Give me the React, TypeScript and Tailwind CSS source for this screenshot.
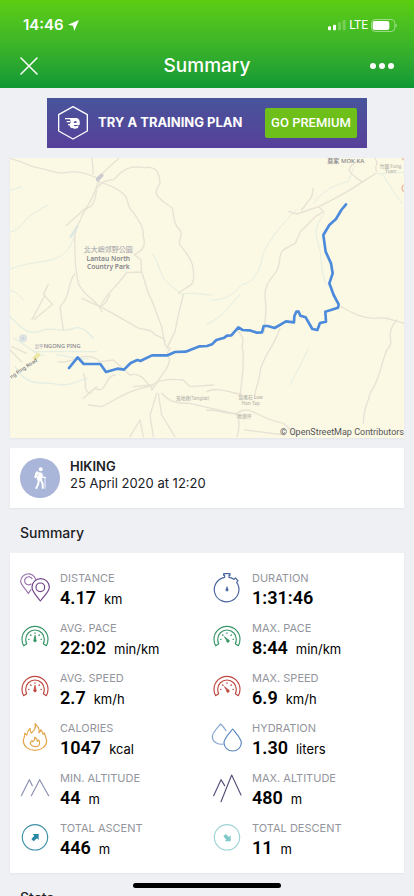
import type { ReactNode } from 'react';

function GaugeIcon({ color, max }: { color: string; max?: boolean }) {
  return (
    <svg viewBox="0 0 90 90" className="size-[30px]" fill="none" stroke={color} strokeWidth="3.5" strokeLinejoin="round" strokeLinecap="round" aria-hidden="true">
      <path d="M11 68C6 60 6 54 6 49a39 39 0 0 1 78 0c0 5 0 11-5 19l-9-6c2-4 3-8 3-13a28 28 0 0 0-56 0c0 5 1 9 3 13z" />
      <path d="M26 49h1M63 49h1M32 36l1 1M58 36l-1 1M45 30v1" strokeWidth="4" />
      {max ? (
        <path d="M38 42l6 10a4 4 0 1 0 5-2z" fill={color} strokeWidth="2.5" />
      ) : (
        <path d="M45 38l-3 12a4 4 0 1 0 6 0z" fill={color} strokeWidth="2.5" />
      )}
    </svg>
  );
}

function LineIcon({ color, children }: { color: string; children: ReactNode }) {
  return (
    <svg viewBox="0 0 90 90" className="size-[30px] overflow-visible" fill="none" stroke={color} strokeWidth="3.5" strokeLinecap="round" strokeLinejoin="round" aria-hidden="true">
      {children}
    </svg>
  );
}

const stats: { label: string; value: string; unit: string; icon: ReactNode }[] = [
  {
    label: 'DISTANCE', value: '4.17', unit: 'km',
    icon: (
      <LineIcon color="#70458c">
        <g stroke="#9a74ae">
          <path d="M25 61C14 45 2 35 2 25a23 23 0 0 1 45-6" />
          <path d="M25 61l8-11M36 17a12 12 0 1 0-3 16" />
        </g>
        <path d="M61 84C47 65 36 56 36 43a26 26 0 0 1 52 0c0 13-13 22-27 41z" />
        <circle cx="61" cy="43" r="13" />
      </LineIcon>
    ),
  },
  {
    label: 'DURATION', value: '1:31:46', unit: '',
    icon: (
      <LineIcon color="#48649c">
        <path d="M38 13V7h-3V2h19v5h-3v6c6 1 11 3 15 6l4-4 8 8-4 5A37 37 0 1 1 38 13z" />
        <path d="M45 42l-3 7a3.500 3.500 0 1 0 6 0z" fill="#48649c" strokeWidth="2" />
      </LineIcon>
    ),
  },
  { label: 'AVG. PACE', value: '22:02', unit: 'min/km', icon: <GaugeIcon color="#389565" /> },
  { label: 'MAX. PACE', value: '8:44', unit: 'min/km', icon: <GaugeIcon color="#389565" max /> },
  { label: 'AVG. SPEED', value: '2.7', unit: 'km/h', icon: <GaugeIcon color="#bf4941" /> },
  { label: 'MAX. SPEED', value: '6.9', unit: 'km/h', icon: <GaugeIcon color="#bf4941" max /> },
  {
    label: 'CALORIES', value: '1047', unit: 'kcal',
    icon: (
      <LineIcon color="#e3a548">
        <path d="M45 2c9 9 14 14 12 27 4-2 5-5 5-9 5 5 7 9 7 14l5-4c-1 8 6 14 6 24a35 28 0 0 1-70 0c0-9 6-14 4-23l7 5c0-9 3-14 9-20 0 6 1 11 4 14 9-8 15-14 11-28z" />
        <path d="M44 43c8 4 8 8 8 12l5-4c5 9 2 20-11 20-14 0-19-11-11-17 2-3 1 1 3 2 5-3 7-7 6-13z" />
      </LineIcon>
    ),
  },
  {
    label: 'HYDRATION', value: '1.30', unit: 'liters',
    icon: (
      <LineIcon color="#5c87bf">
        <path d="M34 63C15 67 1 55 1 41 1 29 14 17 26 3c8 8 13 14 16 20" stroke="#86a6d1" />
        <path d="M62 18c14 17 26 29 26 41a26 25 0 0 1-52 0c0-12 12-24 26-41z" />
      </LineIcon>
    ),
  },
  {
    label: 'MIN. ALTITUDE', value: '44', unit: 'm',
    icon: <LineIcon color="#8990b1"><path d="M4 68L28 20l9 18M34 68l25-48 27 48" /></LineIcon>,
  },
  {
    label: 'MAX. ALTITUDE', value: '480', unit: 'm',
    icon: <LineIcon color="#57527c"><path d="M5 68L27 20l11 18M27 86L59 6l28 60" /></LineIcon>,
  },
  {
    label: 'TOTAL ASCENT', value: '446', unit: 'm',
    icon: (
      <LineIcon color="#3d92a8">
        <circle cx="45" cy="43" r="38" />
        <path d="M38 33h18v18l-5-5-10 9-7-7 9-10z" fill="#2788a3" stroke="none" />
      </LineIcon>
    ),
  },
  {
    label: 'TOTAL DESCENT', value: '11', unit: 'm',
    icon: (
      <LineIcon color="#9ed3d5">
        <circle cx="45" cy="43" r="38" />
        <path d="M56 37v18H38l5-5-9-10 7-7 10 9z" fill="#80c9cb" stroke="none" />
      </LineIcon>
    ),
  },
];

function RouteMap() {
  return (
    <svg viewBox="30 474 1182 840" className="block w-full bg-[#fbf8e4]" fill="none" strokeLinejoin="round" strokeLinecap="round" role="img" aria-label="Map of the hiking route">
      {/* streams */}
      <g stroke="#e4eee3" strokeWidth="3">
        <path d="M30 697c40-10 40-40 68-55l45-27M30 572l35-12M30 808c60-28 130-15 165-50 20-20 25-40 40-85M32 872c20 2 30 20 38 28M455 760c25 25 20 65 50 90l40 33c30-8 50 0 90 2M635 900c50 0 70-25 90-45 45-10 55-50 65-95 20-45 55-85 98-130" />
        <path d="M1060 505l-15 40c-45 10-80 30-105 65M975 640c-35 40-30 60-15 110 5 40 5 80 20 105M925 1045c-15 40-40 75-55 110M720 885c-30 25-45 65-100 88M1145 520l60 90M1125 522l85-5" />
        <path d="M30 950c40 40 60 60 100 40 30-10 60 10 90-5 30-10 50 20 60 30M45 1100c30 50 60 50 110 50 60 15 90-15 110-15M100 1055h190M40 1015c20 5 80 60 90 50M170 1065c20-5 60 20 95 10" strokeWidth="4" />
      </g>
      {/* roads and footpaths */}
      <g stroke="#e8e2d5" strokeWidth="4">
        <path d="M30 475c45 12 60 25 80 28 35 5 60 20 85 15 40-8 70 5 97 16l65-60M275 474c5 20 2 35 5 47M300 532c-12 35-20 60-40 90l-62 55M290 570c-5 30-12 48-20 50-25 10-22 35-35 50-15 25-10 60-10 90 0 50 5 60 10 90 15 40 60 50 70 85" />
        <path d="M292 563c20-25 30-20 50-25 35-40 60-40 90-35 40-5 45 15 48 45-5 15-20 25-5 43 15 18 25 20 42 33 5 30 5 50 22 65 15 20-10 30 2 48 40 45 40 65 40 100-5 25-20 20-45 43" />
        <path d="M292 545c40 10 70 25 85 45 10 20 5 35 25 50 15 25 30 40 28 70 10 30-5 45-28 53l22 18v35l-45 2c-25 40-60 60-78 102M425 815c15 50 20 70 30 85l30 80 10 55 15 10c-25 35 15 10-10 60l-45 65" />
        <path d="M145 853l-15 30 28 30-55 45M135 885l-40 75M225 820c-25 30-10 65-45 100l10 70M245 895l55 25c25-10 20-25 30-35M300 920c50 25 60 35 100 55 20 20 50 5 65 30 30 10 30 15 30 20M550 885l-15 60-10 50-25 50" />
        <path d="M30 1050l35 35M35 1040l45 20M175 1085c40 10 80-40 125 0l40-5 50 45c35-10 50 25 65 40M250 1120c15 30-5 50 20 60l15-15c35 20 30-40 60-40M250 1195l40-35M265 1215l40 5c50-25 80-50 140-60M450 1160c20-20 60-25 100-20l20 20 70-5M400 1160l55-5M475 1180l10 65 40 65M470 1180l-20 65 10 65M485 1180c20 20 30 30 85 30l150 35M390 1310l30-50 10 50" />
        <path d="M711 990c20 20 20 30 15 50 10 30 0 100-5 140M840 985c-20 60-50 80-60 130 0 30-20 60-15 80M620 1175c30-15 60 0 105 8M620 1230c50 0 60 15 90 10 40-30 60 15 140 30l40 35M710 1245c10 20 10 40 0 65M735 1290l120 15" />
        <path d="M1125 522l-45 28c-45 32-75 45-124 70l-65 22-25-8M956 620l15 15-25 15-45 45-15 35c-40 20-45 20-48 55-5 45-30 40-40 80-8 20 0 40 0 60l-5 70M1130 515c-10-20 10-20-5-40M1085 545c-50-35-45-40-15-60M905 630l30-40 5-25M1022 920c30 15 60 35 100 35 40-5 50 5 90 15M1190 960c-40 45 0 65-30 90-20 50-20 90-50 130-5 30-20 40-20 90" />
      </g>
      <path d="M1210 556c-5 5-5 12 0 18M1207 475l3 4" stroke="#e9b9a0" strokeWidth="4" />
      <path d="M293 538l12-12" stroke="#cccbd1" strokeWidth="11" />
      <path d="M212 710c8-8 10-18 20-30" stroke="#dfe7e2" strokeWidth="8" />
      <circle cx="69" cy="1015" r="8" fill="#ced6df" stroke="#dde2e2" strokeWidth="8" />
      <path d="M105 1074l9-9" stroke="#eee7a5" strokeWidth="13" />
      {/* recorded track */}
      <path
        d="M207 1104L233 1072L251 1092L301 1092L318 1116L352 1106L372 1109L392 1089L412 1080L421 1083L456 1066L503 1066L525 1056L557 1055L599 1039L621 1038L636 1033L649 1020L673 1013L681 1007L694 1006L715 982L728 990L748 991L771 998L786 997L791 978L803 978L824 984L858 964L882 967L883 949L889 935L896 935L901 947L917 952L937 987L952 990L960 969L978 965L976 935L1014 923L1016 913L1001 885L988 850L998 820L993 790L977 755L970 705L988 675L1008 657L1024 630L1038 613"
        stroke="#4c8bdb" strokeWidth="8"
      />
      <g stroke="none" fontFamily="'Noto Sans', 'Noto Sans CJK TC', sans-serif" fill="#85858b" fontSize="19" fontWeight="500">
        <text x="325" y="756" textAnchor="middle" fontSize="21" fill="#a2a2aa" fontWeight="400">北大嶼郊野公園</text>
        <text x="325" y="782" textAnchor="middle" fontSize="20" fontWeight="600">Lantau North</text>
        <text x="325" y="808" textAnchor="middle" fontSize="20" fontWeight="600">Country Park</text>
        <text x="104" y="1045" fontSize="13" fill="#b5b5bb">昂平</text>
        <text x="131" y="1045" fontSize="17">NGONG PING</text>
        <text x="982" y="490" fontSize="18">莫家 MOK KA</text>
        <g fill="#b8b6ac" fontSize="14">
          <text x="1172" y="504" textAnchor="middle">竹園 Fung</text>
          <text x="1172" y="520" textAnchor="middle">Yuen</text>
          <text x="528" y="1200">羗地塘(Tanglat)</text>
          <text x="752" y="1197" textAnchor="middle">龍尾石 Low</text>
          <text x="752" y="1214" textAnchor="middle">Hon Tap</text>
          <text x="712" y="1255">地塘坪</text>
        </g>
        <text transform="translate(34 1136) rotate(-34)" fontSize="15" fill="#6f6f74">ng Ping Road</text>
      </g>
    </svg>
  );
}

export default function App() {
  return (
    <div className="flex h-screen flex-col overflow-hidden bg-[#eff0f3] font-['Inter',sans-serif] text-[#202125]">
      <header className="shrink-0 bg-linear-to-b from-[#5ccd10] via-[#3cb528] to-[#0d9834] text-white">
        <div className="flex h-11 items-center justify-between pt-[6px] pr-[17px] pl-[23px]">
          <div className="flex items-center gap-1">
            <span className="text-[15px] font-semibold">14:46</span>
            <svg viewBox="0 0 30 30" className="size-[11px]" fill="currentColor" aria-hidden="true">
              <path d="M30 0L17 30l-3-14L0 13z" />
            </svg>
          </div>
          <div className="flex items-center gap-[3px]">
            <svg viewBox="0 0 54 36" className="h-3 w-[18px]" fill="currentColor" aria-hidden="true">
              <rect x="0" y="22" width="9" height="12" rx="3" />
              <rect x="15" y="17" width="9" height="17" rx="3" />
              <rect x="30" y="10" width="9" height="24" rx="3" opacity=".25" />
              <rect x="44" y="3" width="9" height="31" rx="3" opacity=".25" />
            </svg>
            <span className="font-['Roboto',sans-serif] text-xs">LTE</span>
            <svg viewBox="0 0 78 39" className="h-[13px] w-[26px]" fill="none" aria-hidden="true">
              <rect x="1.500" y="1.500" width="70" height="36" rx="11" stroke="#fff" strokeOpacity=".45" strokeWidth="3" />
              <rect x="5" y="6" width="50" height="27" rx="6" fill="#fff" />
              <path d="M74 14c4 2 4 9 0 11z" fill="#fff" opacity=".6" />
            </svg>
          </div>
        </div>
        <div className="grid h-11 grid-cols-[1fr_auto_1fr] items-center px-5 pb-px">
          <button type="button" aria-label="Close" className="justify-self-start">
            <svg viewBox="0 0 18 18" className="size-[18px]" stroke="currentColor" strokeWidth="1.500" fill="none" strokeLinecap="round">
              <path d="M1 1l16 16M17 1L1 17" />
            </svg>
          </button>
          <h1 className="text-[19px] leading-6 font-medium">Summary</h1>
          <button type="button" aria-label="More options" className="-mr-2 flex gap-[3px] justify-self-end px-2">
            <span className="size-[6px] rounded-full bg-white" />
            <span className="size-[6px] rounded-full bg-white" />
            <span className="size-[6px] rounded-full bg-white" />
          </button>
        </div>
      </header>

      <main className="flex shrink-0 flex-col px-[10px] pt-[10px]">
        <section className="flex h-[50px] w-[320px] items-center self-center bg-linear-to-b from-[#47549b] to-[#57409a] pr-[10px] pl-[10px] text-white">
          <svg viewBox="0 0 96 102" className="h-[34px] w-8 shrink-0" fill="none" stroke="#fff" strokeWidth="4" strokeLinejoin="round" aria-hidden="true">
            <path d="M48 2l43 24v49L48 99 5 75V26z" />
            <path d="M24 38h25M29 47h10M33 56h8" strokeWidth="3.500" />
            <path d="M38 36h18c10 0 14 8 12 21H50c2 5 9 4 15 1l-2 8c-14 5-26 0-25-9l3-9z" fill="#fff" stroke="none" />
            <path d="M50 51c2-8 10-7 9-1z" fill="#49509b" stroke="none" />
          </svg>
          <span className="ml-[9px] text-[13px] font-bold whitespace-nowrap">TRY A TRAINING PLAN</span>
          <button type="button" className="ml-auto h-[30px] w-[92px] rounded-xs bg-[#6ebf19] font-['Roboto',sans-serif] text-[13px] font-medium whitespace-nowrap">
            GO PREMIUM
          </button>
        </section>

        <section className="relative mt-[10px] shadow-xs">
          <RouteMap />
          <span className="absolute right-0 bottom-0 font-['Roboto',sans-serif] text-[9px] leading-3 text-[#55555a]">© OpenStreetMap Contributors</span>
        </section>

        <section className="mt-[10px] flex h-[60px] items-start gap-[10px] bg-white p-[10px] shadow-xs">
          <span className="grid size-10 place-items-center rounded-full bg-[#a9b5d9]">
            <svg viewBox="0 0 40 66" className="h-[22px] w-[14px]" fill="none" stroke="#fff" strokeLinecap="round" strokeLinejoin="round" aria-hidden="true">
              <circle cx="22" cy="7" r="6" fill="#fff" stroke="none" />
              <path d="M16 17l10 2-1 22-12-2z" fill="#fff" strokeWidth="3" />
              <path d="M16 40l-1 10-6 13M23 40l5 10v13" strokeWidth="6" />
              <path d="M24 22l4 8 8 2" strokeWidth="4" />
              <path d="M35 31v33" strokeWidth="2.500" />
              <path d="M9 15L4 31l4 2 5-17z" fill="#fff" strokeWidth="3" />
            </svg>
          </span>
          <div className="text-[13px] leading-[17px]">
            <h2 className="font-semibold">HIKING</h2>
            <p>25 April 2020 at 12:20</p>
          </div>
        </section>

        <h2 className="h-[45px] pt-[15px] pl-[10px] text-sm leading-5 font-medium">Summary</h2>

        <dl className="grid grid-cols-2 bg-white py-[10px] pl-[10px] shadow-xs">
          {stats.map((s) => (
            <div key={s.label} className="flex h-[50px] items-center gap-[10px]">
              {s.icon}
              <div className="leading-5">
                <dt className="text-[11px] leading-5 text-[#93959d]">{s.label}</dt>
                <dd className="flex items-baseline gap-2 leading-5 text-black">
                  <span className="font-['Roboto',sans-serif] text-lg leading-5 font-semibold">{s.value}</span>
                  {s.unit && <span className="text-[13px] leading-5">{s.unit}</span>}
                </dd>
              </div>
            </div>
          ))}
        </dl>

        <h2 className="h-[45px] pt-[15px] pl-[10px] text-sm leading-5 font-medium">Stats</h2>
      </main>
      <div className="fixed bottom-2 left-1/2 h-[5px] w-[148px] -translate-x-1/2 rounded-full bg-black" />
    </div>
  );
}
